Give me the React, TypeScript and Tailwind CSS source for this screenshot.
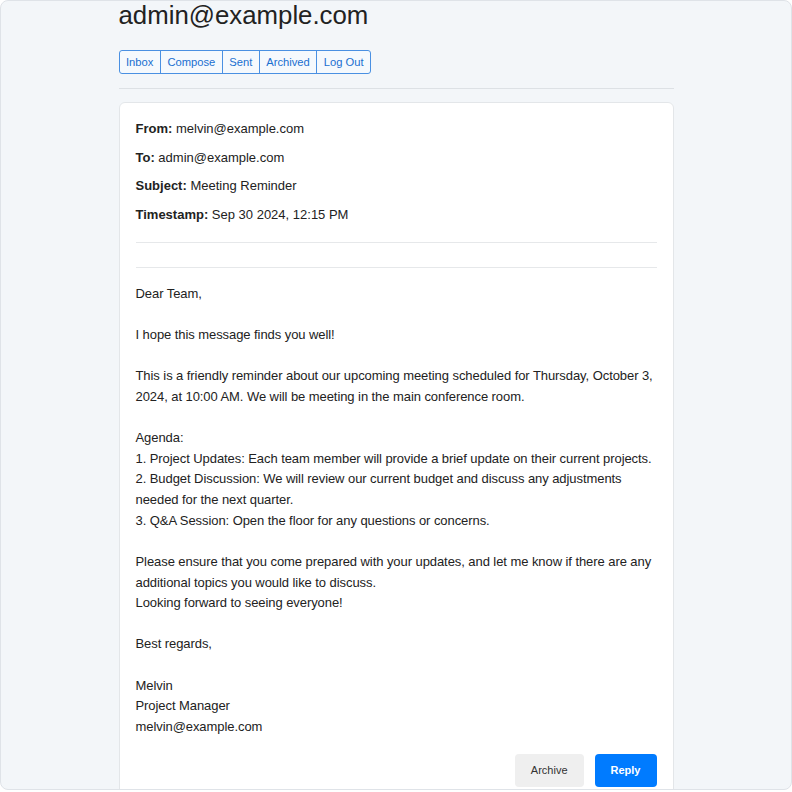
import React from "react";

const body = `Dear Team,

I hope this message finds you well!

This is a friendly reminder about our upcoming meeting scheduled for Thursday, October 3, 2024, at 10:00 AM. We will be meeting in the main conference room.

Agenda:
1. Project Updates: Each team member will provide a brief update on their current projects.
2. Budget Discussion: We will review our current budget and discuss any adjustments needed for the next quarter.
3. Q&A Session: Open the floor for any questions or concerns.

Please ensure that you come prepared with your updates, and let me know if there are any additional topics you would like to discuss.
Looking forward to seeing everyone!

Best regards,

Melvin
Project Manager
melvin@example.com`;

export default function App() {
  const navs = ["Inbox", "Compose", "Sent", "Archived", "Log Out"];
  return (
    <div
      className="h-[792px] w-[792px] overflow-hidden"
      style={{ fontFamily: '"Liberation Sans", Arial, sans-serif' }}
    >
      <div className="h-[790px] w-[792px] overflow-hidden rounded-[8px] border border-[#dfe3e8] bg-[#f3f6f9]">
        <div className="mx-auto w-[555px]">
          <h1 className="mt-[-2px] text-[25.8px] leading-[32px] text-[#222]">admin@example.com</h1>
          <div className="mt-[19px] flex h-[24px] w-fit overflow-hidden rounded-[3px] border border-[#4a90e2] bg-[#f5f9fd]">
            {navs.map((n, i) => (
              <div
                key={n}
                className={`flex items-center px-[6.5px] text-[11.2px] text-[#1a6fd0] ${i > 0 ? "border-l border-[#4a90e2]" : ""}`}
              >
                {n}
              </div>
            ))}
          </div>
          <div className="mt-[14px] h-px bg-[#dde1e5]" />
          <div className="mt-[13px] rounded-[6px] border border-[#e3e6e9] bg-white px-[16px] pt-[16px] pb-[16px] text-[13px] leading-[20.64px] text-[#222]">
            <div className="border-b border-[#e6e8ea] pb-[16px]">
              <p className="mb-[8px]"><b>From:</b> melvin@example.com</p>
              <p className="mb-[8px]"><b>To:</b> admin@example.com</p>
              <p className="mb-[8px]"><b>Subject:</b> Meeting Reminder</p>
              <p><b>Timestamp:</b> Sep 30 2024, 12:15 PM</p>
            </div>
            <div className="mt-[24px] border-t border-[#e6e8ea] pt-[16px] whitespace-pre-line tracking-[-0.07px]">
              {body}
            </div>
            <div className="mt-[16px] flex justify-end gap-[11px]">
              <button className="h-[33px] rounded-[4px] bg-[#efefef] px-[16px] text-[11px] text-[#333]">Archive</button>
              <button className="h-[33px] rounded-[4px] bg-[#007bff] px-[16px] text-[11px] font-bold text-white">Reply</button>
            </div>
          </div>
        </div>
      </div>
    </div>
  );
}
